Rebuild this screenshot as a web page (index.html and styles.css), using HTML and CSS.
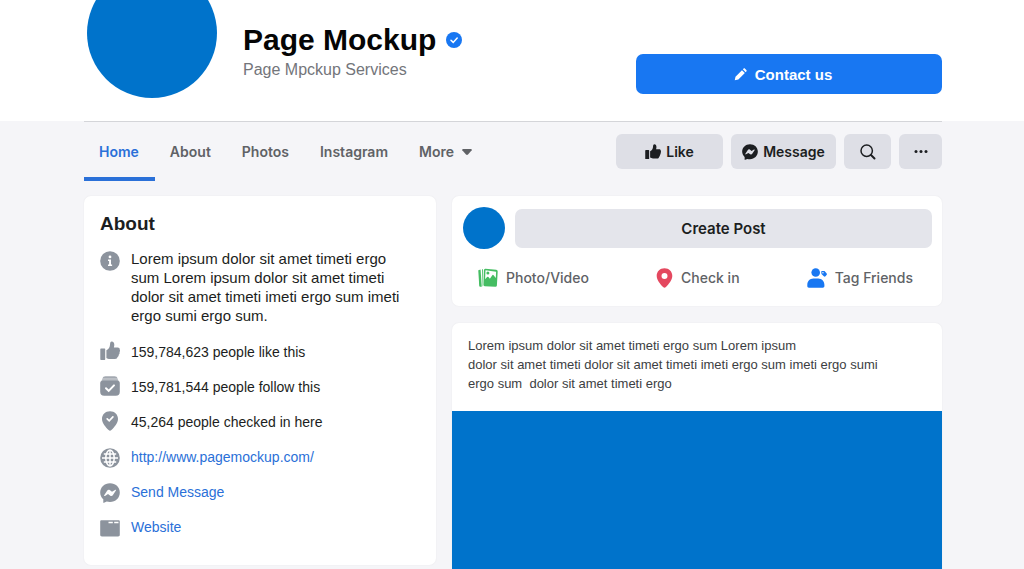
FILE: index.html
```html
<!DOCTYPE html>
<html lang="en">
<head>
<meta charset="utf-8">
<meta name="viewport" content="width=device-width, initial-scale=1">
<title>Page Mockup</title>
<link rel="stylesheet" href="styles.css">
</head>
<body>
<svg class="sprite" aria-hidden="true">
  <symbol id="thumb" viewBox="0 0 20 20">
    <path d="M1 7.500h3.600q.6 0 .6.6v10.200q0 .6-.6.6H1q-.7 0-.7-.6V8.100q0-.6.7-.6z"/>
    <path d="M6.400 9.200c2.400-1.200 3.400-3 3.600-5.400C10.100 1.600 10.500.4 11.700.4c1.900 0 2.700 1.700 2.600 3.800l-.4 2.400h3.900c1.300 0 2.100.9 1.900 2 .5.900.4 1.900-.2 2.600.3 1-.1 2-.8 2.500.1 1.100-.4 2-1.200 2.400-.1 1.300-1 1.900-2.500 1.900H10c-1.600 0-2.500-.6-3.600-1.100z"/>
  </symbol>
  <symbol id="messenger" viewBox="0 0 20 20">
    <path fill-rule="evenodd" d="M10 .2C4.400.2.2 4.300.2 9.500c0 2.800 1.200 5.200 3.100 6.800v3.100c0 .4.4.6.7.4l2.700-1.200c1 .3 2.100.4 3.300.4 5.600 0 9.800-4.100 9.800-9.500S15.600.2 10 .2zM4.200 12.200l3.100-4.800c.6-.8 1.600-1 2.400-.4l2.300 1.800 3-1.900c.6-.4 1.200.2.9.7l-3.100 4.700c-.6.9-1.700 1-2.500.4L8 11.100l-3 1.800c-.6.3-1.100-.2-.8-.7z"/>
  </symbol>
</svg>

<header class="header">
  <div class="container header-row">
    <div class="avatar avatar-large"></div>
    <div class="identity">
      <div class="title-row">
        <h1>Page Mockup</h1>
        <svg class="verified" viewBox="0 0 16 16" role="img" aria-label="Verified"><circle cx="8" cy="8" r="8" fill="#1877f2"/><path d="M5 8.300l2.200 2.100L11.200 6" fill="none" stroke="#fff" stroke-width="1.500" stroke-linecap="round"/></svg>
      </div>
      <p class="subtitle">Page Mpckup Services</p>
    </div>
    <button class="contact" type="button">
      <svg viewBox="0 0 14 14" aria-hidden="true"><path d="M.8 13.200l.8-3.900L8.600 2.300l3.100 3.100-7 7zM9.500 1.400l.7-.7c.5-.5 1.200-.5 1.700 0l1.400 1.400c.5.5.5 1.200 0 1.700l-.7.7z"/></svg>
      Contact us
    </button>
  </div>
</header>

<div class="container bar">
  <nav class="tabs" aria-label="Page sections">
    <a class="tab active" href="#home" aria-current="page">Home</a>
    <a class="tab" href="#about">About</a>
    <a class="tab" href="#photos">Photos</a>
    <a class="tab" href="#instagram">Instagram</a>
    <button class="tab" type="button">More <svg class="caret" viewBox="0 0 10 6" aria-hidden="true"><path d="M1 0h8q1 .2.700 1.300L6 5.500q-1 .8-2 0L.3 1.300Q0 .2 1 0z"/></svg></button>
  </nav>
  <div class="actions">
    <button class="action like" type="button"><svg aria-hidden="true"><use href="#thumb"/></svg>Like</button>
    <button class="action message" type="button"><svg aria-hidden="true"><use href="#messenger"/></svg>Message</button>
    <button class="action search" type="button" aria-label="Search"><svg viewBox="0 0 16 16" aria-hidden="true"><g fill="none" stroke="#1c1e21" stroke-linecap="round"><circle cx="6.700" cy="6.700" r="5.700" stroke-width="1.500"/><path d="M11 11l3.500 3.500" stroke-width="2"/></g></svg></button>
    <button class="action more" type="button" aria-label="More options"><svg viewBox="0 0 16 16" aria-hidden="true"><circle cx="3" cy="7.500" r="1.500"/><circle cx="8" cy="7.500" r="1.500"/><circle cx="13" cy="7.500" r="1.500"/></svg></button>
  </div>
</div>

<main class="container columns">
  <section class="card about" id="about">
    <h2>About</h2>
    <ul class="facts">
      <li class="intro">
        <svg viewBox="0 0 20 20" aria-hidden="true"><circle cx="10" cy="10" r="9.800"/><g fill="#fff"><circle cx="10" cy="5.900" r="1.400"/><path d="M8 8.500h3v5h1.100v1.400H8v-1.400h1.100v-3.600H8z"/></g></svg>
        <p>Lorem ipsum dolor sit amet timeti ergo sum Lorem ipsum dolor sit amet timeti dolor sit amet timeti imeti ergo sum imeti ergo sumi ergo sum.</p>
      </li>
      <li class="stat"><svg aria-hidden="true"><use href="#thumb"/></svg><span>159,784,623 people like this</span></li>
      <li class="stat"><svg viewBox="0 0 20 20" aria-hidden="true"><path d="M5.500.2h9c1.600 0 2.600.8 3 2.200H2.500C2.900 1 3.900.2 5.500.2z" opacity=".8"/><path d="M2.500 2.400h15l1.200 2.800H1.300z" opacity=".6"/><path d="M3 4.600h14c1.800 0 2.800 1 2.800 2.800v8.400c0 2.700-1.300 4-4 4H4.200c-2.700 0-4-1.300-4-4V7.400C.2 5.600 1.200 4.600 3 4.600z"/><path d="M6 12.300l2.700 2.600L14 9.400" fill="none" stroke="#fff" stroke-width="2" stroke-linecap="round"/></svg><span>159,781,544 people follow this</span></li>
      <li class="stat"><svg viewBox="0 0 20 20" aria-hidden="true"><path d="M10 .2c4.700 0 8 3.300 8 7.700 0 4.200-3.600 8-6.600 11.200-.9 1-1.900 1-2.800 0C5.600 15.900 2 12.100 2 7.900 2 3.500 5.300.2 10 .2z"/><path d="M7.200 7.900l2 1.900 3.700-4" fill="none" stroke="#fff" stroke-width="1.700" stroke-linecap="round"/></svg><span>45,264 people checked in here</span></li>
      <li><svg viewBox="0 0 20 20" aria-hidden="true"><circle cx="10" cy="10" r="9.800"/><g fill="none" stroke="#fff" stroke-width="1.500"><path d="M10 2v16M2 10h16M3.800 6h12.400M3.800 14h12.400"/><ellipse cx="10" cy="10" rx="4.200" ry="8"/></g></svg><a href="http://www.pagemockup.com/">http://www.pagemockup.com/</a></li>
      <li><svg aria-hidden="true"><use href="#messenger"/></svg><a href="#message">Send Message</a></li>
      <li><svg viewBox="0 0 20 20" aria-hidden="true"><path d="M1.500 2.200h17c.8 0 1.300.5 1.300 1.300v13.300c0 1-.6 1.700-1.700 1.700H1.900c-1.100 0-1.700-.7-1.700-1.700V3.500c0-.8.500-1.300 1.300-1.300z"/><path d="M8.500 4.500h4.300M14.200 4.500h4.300" stroke="#fff" stroke-width="1.500"/></svg><a href="#website">Website</a></li>
    </ul>
  </section>

  <div class="feed">
    <section class="card composer" aria-label="Create a post">
      <div class="composer-top">
        <div class="avatar avatar-small"></div>
        <button class="create" type="button">Create Post</button>
      </div>
      <div class="composer-options">
        <button class="option" type="button"><svg viewBox="0 0 20 20" aria-hidden="true"><g fill="#45bd62"><path d="M.3 2.200l2.300-.8 1.100 17.300-1.600.1q-.8 0-.9-1z"/><path d="M4 1.200l.9.100-.5 17h-.5z"/><path fill-rule="evenodd" d="M7.400.8l10.800.9q1.500.2 1.500 1.700l-.8 14q-.1 1.400-1.500 1.400l-10.700-.5q-1.400-.1-1.300-1.500l.5-14.500Q6 .7 7.400.8zM7.500 2.300l-.4 9 2-2.300q.7-.7 1.300 0l1.500 1.800 2.400-3.600q.6-.9 1.300 0l2.200 2.700.3-6.200z"/><circle cx="9.900" cy="5" r="1.500"/></g></svg>Photo/Video</button>
        <button class="option pin" type="button"><svg viewBox="0 0 16 20" aria-hidden="true"><path fill="#e4485f" fill-rule="evenodd" d="M8 .2c4.600 0 7.800 3.300 7.800 7.700 0 4.200-3.600 8-6.400 11.200-.9 1-1.900 1-2.800 0C3.800 15.900.2 12.100.2 7.900.2 3.500 3.400.2 8 .2zM8 4.900a3 3 0 1 0 0 6 3 3 0 0 0 0-6z"/></svg>Check in</button>
        <button class="option" type="button"><svg viewBox="0 0 20 20" aria-hidden="true"><g fill="#1877f2"><circle cx="8.700" cy="4.500" r="4.300"/><path d="M6.300 10.600h4.900c3.500 0 6.200 2.800 6.200 6.200v1.300c0 1-.6 1.600-1.600 1.600H1.900c-1 0-1.600-.6-1.600-1.600v-1.300c0-3.400 2.600-6.200 6-6.200z"/><path fill-rule="evenodd" d="M14.700 3h2.800l2 2.200q.8 1 0 1.900l-1 1.200q-.8.700-1.700 0l-2.300-2.200-.3-2.400zM15.900 4a.7.700 0 1 0 .1 1.400.7.700 0 0 0-.1-1.400z"/></g></svg>Tag Friends</button>
      </div>
    </section>

    <article class="card post">
      <p>Lorem ipsum dolor sit amet timeti ergo sum Lorem ipsum<br>dolor sit amet timeti dolor sit amet timeti imeti ergo sum imeti ergo sumi<br>ergo sum&nbsp; dolor sit amet timeti ergo</p>
      <div class="post-image"></div>
    </article>
  </div>
</main>
</body>
</html>
```
FILE: styles.css
```css
* { box-sizing: border-box; }

body {
  margin: 0;
  min-height: 100vh;
  display: flex;
  flex-direction: column;
  background: #f5f5f8;
  color: #1c1e21;
  font-family: "Liberation Sans", Arial, sans-serif;
  font-size: 14px;
}

h1, h2, p, ul { margin: 0; padding: 0; }
ul { list-style: none; }
button { border: 0; padding: 0; background: none; color: inherit; font: inherit; cursor: pointer; }
a { text-decoration: none; }
svg { flex: none; }

.sprite { display: none; }
.container { width: 100%; padding: 0 82px 0 84px; }

/* Header */
.header { background: #fff; overflow: hidden; }
.header-row { display: flex; align-items: flex-start; }

.avatar { flex: none; border-radius: 50%; background: #0073cb; }
.avatar-large { width: 130px; height: 130px; margin: -32px 26px 23px 3px; }
.avatar-small { width: 42px; height: 42px; }

.identity { flex: 1; padding-top: 20px; }
.title-row { display: flex; align-items: center; gap: 10px; }
h1 { color: #050505; font-size: 30px; line-height: 39px; }
.verified { width: 16px; height: 16px; }
.subtitle { color: #73757a; font-size: 16px; line-height: 22px; }

.contact {
  display: flex;
  align-items: center;
  justify-content: center;
  gap: 8px;
  width: 306px;
  height: 40px;
  margin-top: 54px;
  padding-right: 12px;
  border-radius: 7px;
  background: #1877f2;
  color: #fff;
  font-size: 15px;
  font-weight: 700;
}
.contact svg { width: 13px; height: 13px; fill: #fff; }

/* Tab bar */
.bar { display: flex; justify-content: space-between; }
.tabs { display: flex; height: 60px; }
.tab {
  display: flex;
  align-items: center;
  gap: 8px;
  padding: 4px 16px 0 15px;
  border-bottom: 4px solid transparent;
  color: #606266;
  font-family: Inter, sans-serif;
  font-size: 14px;
  font-weight: 600;
}
.tab.active { border-color: #2a70d8; color: #2a70d8; }
.caret { width: 10px; height: 6px; fill: #606266; }

.tabs, .actions { border-top: 1px solid #d4d5d9; }
.actions { flex: 1; display: flex; justify-content: flex-end; gap: 8px; padding-top: 12px; }
.action {
  display: flex;
  align-items: center;
  justify-content: center;
  gap: 5px;
  height: 35px;
  border-radius: 6px;
  background: #dedfe6;
  font-family: Inter, sans-serif;
  font-size: 14px;
  font-weight: 600;
}
.action svg { width: 16px; height: 16px; fill: #1c1e21; }
.like { width: 107px; }
.message { width: 105px; }
.search { width: 47px; }
.more { width: 43px; }

/* Columns */
.columns { flex: 1; display: grid; grid-template-columns: 352fr 490fr; gap: 16px; padding-top: 15px; }
.card { border-radius: 7px; background: #fff; box-shadow: 0 0 2px rgba(0, 0, 0, .06); }

.about { align-self: start; padding: 16px 24px 28px 16px; }
h2 { color: #1c1e21; font-size: 19px; line-height: 23px; }
.facts { display: grid; gap: 16px; margin-top: 14px; color: #1c1e21; }
.facts li { display: flex; align-items: center; gap: 11px; line-height: 19px; }
.facts svg { width: 20px; height: 20px; margin: -1px 0; fill: #8c939d; }
.facts .stat svg { margin: -4px 0 0; }
.facts .intro { align-items: flex-start; margin-bottom: 2px; font-size: 15px; }
.facts .intro svg { margin-top: 2px; }
.facts a { color: #2a70d8; }

.feed { display: flex; flex-direction: column; gap: 17px; }
.composer { padding: 11px 10px 18px 11px; }
.composer-top { display: flex; align-items: center; gap: 10px; }
.create { flex: 1; height: 39px; border-radius: 7px; background: #e4e5eb; color: #1c1e21; font-family: Inter, sans-serif; font-size: 15px; font-weight: 600; }
.composer-options { display: flex; justify-content: space-between; margin-top: 18px; padding: 0 19px 0 15px; }
.option { display: flex; align-items: center; gap: 8px; height: 21px; color: #606266; font-family: Inter, sans-serif; font-size: 14px; font-weight: 500; }
.option svg { width: 20px; height: 20px; }
.option.pin svg { width: 17px; }

.post { flex: 1; display: flex; flex-direction: column; border-radius: 7px 7px 0 0; }
.post p { padding: 13px 16px 18px; color: #3c3e42; font-size: 13px; line-height: 19px; }
.post-image { flex: 1; min-height: 120px; background: #0073cb; }
```
